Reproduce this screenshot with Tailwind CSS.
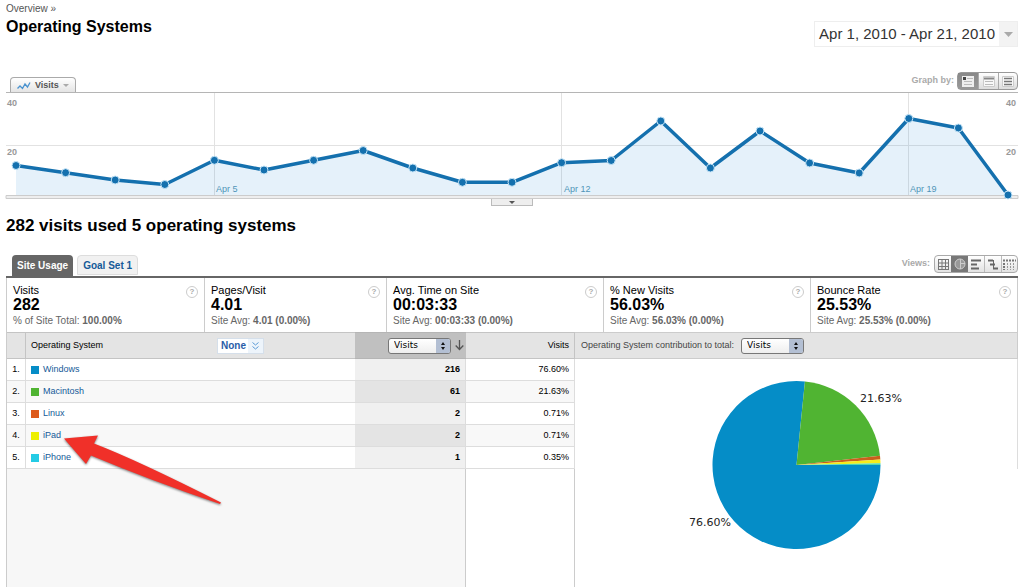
<!DOCTYPE html>
<html lang="en">
<head>
<meta charset="utf-8">
<title>Operating Systems</title>
<script src="https://cdn.jsdelivr.net/npm/@tailwindcss/browser@4"></script>
</head>
<body class="bg-white font-['Liberation_Sans',Arial,sans-serif] text-black">
<div class="flex min-h-screen flex-col px-1.5">

  <header class="flex items-start justify-between pt-1">
    <div>
      <nav class="text-[10px] leading-[10px] text-[#555]"><a href="#">Overview</a> »</nav>
      <h1 class="mt-[3px] text-base leading-5 font-bold">Operating Systems</h1>
    </div>
    <button class="mt-[17px] flex h-[26px] items-stretch border border-[#eee] text-[15px] text-[#333]">
      <span class="flex items-center px-1">Apr 1, 2010 - Apr 21, 2010</span>
      <span class="flex w-[18px] items-center justify-center bg-[#f3f3f3]">
        <svg width="9" height="5" viewBox="0 0 9 5"><path d="M0 0h9L4.500 5z" fill="#aaa"/></svg>
      </span>
    </button>
  </header>

  <div class="mt-[25px] flex h-5 items-end justify-between pl-1">
    <button class="flex h-[15px] items-center gap-1 rounded-t-sm border border-b-0 border-[#aaa] bg-linear-to-b from-white to-[#e4e4e4] px-1.5 text-[9px] leading-none font-bold text-[#555]">
      <svg width="14" height="9" viewBox="0 0 14 9" fill="none" stroke="#4b93cf" stroke-width="1.300"><path d="M.5 7.500 3 5l2.500 2.500L8 3l2.500 3L13 1.500"/></svg>
      Visits
      <svg width="6" height="3" viewBox="0 0 6 3"><path d="M0 0h6L3 3z" fill="#aaa"/></svg>
    </button>
    <div class="flex items-center gap-[3px] self-start text-[9px] font-bold text-[#aaa]">
      <span>Graph by:</span>
      <div class="flex h-[18px] rounded-sm border border-[#999] bg-linear-to-b from-white to-[#ddd]">
        <button aria-label="Day" class="flex w-5 items-center justify-center bg-linear-to-b from-[#888] to-[#999]">
          <svg width="12" height="11" viewBox="0 0 12 11"><path d="M0 0h12v11H0z" fill="#eee"/><path d="M1 1h3v3H1z" fill="#444"/><path d="M5 2.500h6M2 5.500h8M2 8.500h8" stroke="#bbb"/></svg>
        </button>
        <button aria-label="Week" class="flex w-5 items-center justify-center border-l border-[#aaa]">
          <svg width="12" height="11" viewBox="0 0 12 11"><path d="M.5.5h11v10H.5z" fill="#f8f8f8" stroke="#ccc"/><path d="M1 2.500h10" stroke="#888" stroke-width="2"/><path d="M2 5.500h8M2 8.500h8" stroke="#bbb"/></svg>
        </button>
        <button aria-label="Month" class="flex w-[19px] items-center justify-center border-l border-[#aaa]">
          <svg width="12" height="11" viewBox="0 0 12 11"><path d="M.5.5h11v10H.5z" fill="#f8f8f8" stroke="#ccc"/><path d="M2 2.500h8M2 5.500h8M2 8.500h8" stroke="#777" stroke-width="1.500"/></svg>
        </button>
      </div>
    </div>
  </div>

  <div class="border-t border-[#b5b5b5]">
    <svg class="block h-auto w-full overflow-visible font-['Liberation_Sans',Arial,sans-serif] text-[9px]" viewBox="0 0 1012 106">
      <path d="M0 52.500h1012M208.500 0v102M555.500 0v102M902.500 0v102" stroke="#e2e2e2"/>
      <path d="M10 102V72.500L59.600 79.700 109.200 87 158.800 91.500 208.400 67.300 258 77 307.600 67.300 357.200 57.500 406.800 75 456.400 89.300 506 89.300 555.600 69.700 605.200 67.500 654.800 28 704.400 75 754 38 803.600 70 853.200 80 902.800 25.500 952.400 35 1002 102z" fill="#0077cc" fill-opacity=".1"/>
      <path d="M0 102.500h1012v3H0z" fill="#eee" stroke="#ccc"/>
      <polyline points="10,72.500 59.600,79.700 109.200,87 158.800,91.500 208.400,67.300 258,77 307.600,67.300 357.200,57.500 406.800,75 456.400,89.300 506,89.300 555.600,69.700 605.200,67.500 654.800,28 704.400,75 754,38 803.600,70 853.200,80 902.800,25.500 952.400,35 1002,102" fill="none" stroke="#1470ae" stroke-width="3.500" stroke-linejoin="round"/>
      <g fill="#1470ae" stroke="#c5e4f7" stroke-width="1">
        <circle cx="10" cy="72.500" r="4"/><circle cx="59.600" cy="79.700" r="4"/><circle cx="109.200" cy="87" r="4"/><circle cx="158.800" cy="91.500" r="4"/><circle cx="208.400" cy="67.300" r="4"/><circle cx="258" cy="77" r="4"/><circle cx="307.600" cy="67.300" r="4"/><circle cx="357.200" cy="57.500" r="4"/><circle cx="406.800" cy="75" r="4"/><circle cx="456.400" cy="89.300" r="4"/><circle cx="506" cy="89.300" r="4"/><circle cx="555.600" cy="69.700" r="4"/><circle cx="605.200" cy="67.500" r="4"/><circle cx="654.800" cy="28" r="4"/><circle cx="704.400" cy="75" r="4"/><circle cx="754" cy="38" r="4"/><circle cx="803.600" cy="70" r="4"/><circle cx="853.200" cy="80" r="4"/><circle cx="902.800" cy="25.500" r="4"/><circle cx="952.400" cy="35" r="4"/><circle cx="1002" cy="102" r="4"/>
      </g>
      <g fill="#999" font-weight="bold">
        <text x="1" y="13">40</text><text x="1" y="62">20</text>
        <text x="1010" y="13" text-anchor="end">40</text><text x="1010" y="62" text-anchor="end">20</text>
      </g>
      <g fill="#4f95b8"><text x="210" y="99">Apr 5</text><text x="558" y="99">Apr 12</text><text x="904" y="99">Apr 19</text></g>
    </svg>
    <button aria-label="Toggle graph size" class="mx-auto flex h-[7px] w-[42px] items-center justify-center border border-t-0 border-[#bbb] bg-[#eee]">
      <svg width="6" height="3" viewBox="0 0 6 3"><path d="M0 0h6L3 3z" fill="#555"/></svg>
    </button>
  </div>

  <h2 class="mt-2.5 text-[17px] leading-5 font-bold">282 visits used 5 operating systems</h2>

  <div class="mt-[19px] flex items-start justify-between pl-1.5">
    <div class="flex gap-1 text-[10px] font-bold">
      <button class="h-[21px] rounded-t bg-[#666] px-[5px] text-white">Site Usage</button>
      <button class="h-5 rounded-t border border-[#ddd] bg-[#f1f1f1] px-[5px] text-[#155a98]">Goal Set 1</button>
    </div>
    <div class="flex items-center gap-1 text-[9px] font-bold text-[#aaa]">
      <span>Views:</span>
      <div class="flex h-[18px] rounded-sm border border-[#aaa] bg-linear-to-b from-white to-[#e2e2e2]">
        <button aria-label="Table" class="flex w-4 items-center justify-center">
          <svg width="11" height="11" viewBox="0 0 11 11" fill="none" stroke="#777"><path d="M.5 0v11M4 0v11M7.500 0v11M10.500 0v11M0 .5h11M0 4h11M0 7.500h11M0 10.500h11"/></svg>
        </button>
        <button aria-label="Percentage" class="flex w-[17px] items-center justify-center bg-[#777]">
          <svg width="12" height="12" viewBox="0 0 12 12" fill="none" stroke="#ccc"><circle cx="6" cy="6" r="5" fill="#999"/><path d="M6.500 1v10M6.500 5.500H11"/></svg>
        </button>
        <button aria-label="Performance" class="flex w-4 items-center justify-center">
          <svg width="11" height="11" viewBox="0 0 11 11" stroke="#666" stroke-width="2"><path d="M0 1.500h10M0 5.500h6M0 9.500h8"/></svg>
        </button>
        <button aria-label="Comparison" class="flex w-[17px] items-center justify-center border-l border-[#bbb]">
          <svg width="12" height="11" viewBox="0 0 12 11" fill="none" stroke="#666" stroke-width="2"><path d="M1 1.500h5M3 5.500h5M6 9.500h5"/><path d="M6.500 1v9" stroke-width="1"/></svg>
        </button>
        <button aria-label="Pivot" class="flex w-4 items-center justify-center border-l border-[#bbb]">
          <svg width="13" height="11" viewBox="0 0 13 11" fill="none" stroke="#777"><path d="M0 1.500h13" stroke-width="2" stroke-dasharray="2 1"/><path d="M1 4v7" stroke-width="2" stroke-dasharray="2 1"/><path d="M4.500 4v7M7.500 4v7M10.500 4v7" stroke="#999" stroke-dasharray="2 1"/></svg>
        </button>
      </div>
    </div>
  </div>

  <section class="grid grid-cols-[198fr_182fr_217fr_207fr_208fr] border-t-2 border-[#666] text-[10px] leading-[14px] text-[#666]">
    <div class="flex justify-between border-l border-[#ccc] px-1.5 pt-1.5 pb-1">
      <div><h3 class="text-[11px] leading-3 text-black">Visits</h3><p class="text-base leading-[18px] font-bold text-black">282</p><p>% of Site Total: <b>100.00%</b></p></div>
      <button aria-label="Help" class="mt-0.5 size-3 shrink-0 rounded-full border border-[#ccc] text-[8px] leading-[10px] font-bold text-[#aaa]">?</button>
    </div>
    <div class="flex justify-between border-l border-[#ccc] px-1.5 pt-1.5 pb-1">
      <div><h3 class="text-[11px] leading-3 text-black">Pages/Visit</h3><p class="text-base leading-[18px] font-bold text-black">4.01</p><p>Site Avg: <b>4.01 (0.00%)</b></p></div>
      <button aria-label="Help" class="mt-0.5 size-3 shrink-0 rounded-full border border-[#ccc] text-[8px] leading-[10px] font-bold text-[#aaa]">?</button>
    </div>
    <div class="flex justify-between border-l border-[#ccc] px-1.5 pt-1.5 pb-1">
      <div><h3 class="text-[11px] leading-3 text-black">Avg. Time on Site</h3><p class="text-base leading-[18px] font-bold text-black">00:03:33</p><p>Site Avg: <b>00:03:33 (0.00%)</b></p></div>
      <button aria-label="Help" class="mt-0.5 size-3 shrink-0 rounded-full border border-[#ccc] text-[8px] leading-[10px] font-bold text-[#aaa]">?</button>
    </div>
    <div class="flex justify-between border-l border-[#ccc] px-1.5 pt-1.5 pb-1">
      <div><h3 class="text-[11px] leading-3 text-black">% New Visits</h3><p class="text-base leading-[18px] font-bold text-black">56.03%</p><p>Site Avg: <b>56.03% (0.00%)</b></p></div>
      <button aria-label="Help" class="mt-0.5 size-3 shrink-0 rounded-full border border-[#ccc] text-[8px] leading-[10px] font-bold text-[#aaa]">?</button>
    </div>
    <div class="flex justify-between border-x border-[#ccc] px-1.5 pt-1.5 pb-1">
      <div><h3 class="text-[11px] leading-3 text-black">Bounce Rate</h3><p class="text-base leading-[18px] font-bold text-black">25.53%</p><p>Site Avg: <b>25.53% (0.00%)</b></p></div>
      <button aria-label="Help" class="mt-0.5 size-3 shrink-0 rounded-full border border-[#ccc] text-[8px] leading-[10px] font-bold text-[#aaa]">?</button>
    </div>
  </section>

  <main class="grid flex-1 grid-cols-[569fr_443fr] text-[9px]">
    <div class="relative flex flex-col border-l border-[#ccc]">
      <table class="w-full table-fixed border-separate border-spacing-0">
        <colgroup><col class="w-[19px]"><col><col class="w-[111px]"><col class="w-[109px]"></colgroup>
        <thead>
          <tr class="h-[27px] bg-[#e4e4e4]">
            <th class="border-y border-r border-[#c4c4c4] p-0"></th>
            <th class="border-y border-[#c4c4c4] p-0 pl-[5px] text-left font-normal">
              <div class="flex items-center justify-between pr-[91px]">
                <span>Operating System</span>
                <button class="flex h-4 items-center border border-[#d5dfea] bg-white pl-[3px] text-[10px] font-bold text-[#2a5da8]">None
                  <span class="ml-0.5 flex h-full w-[15px] items-center justify-center bg-[#edf4fb]"><svg width="7" height="8" viewBox="0 0 7 8" fill="none" stroke="#5b9bd5"><path d="M.5.5l3 2.500 3-2.500M.5 4.500l3 2.500 3-2.500"/></svg></span>
                </button>
              </div>
            </th>
            <th class="border-y border-[#b5b5b5] bg-[#c0c0c0] p-0">
              <div class="flex items-center justify-end gap-1 pr-0.5">
                <div class="relative">
                  <select aria-label="Metric" class="block h-4 w-[63px] appearance-none rounded-[3px] border border-[#777] bg-linear-to-b from-white to-[#eee] pl-[5px] font-['DejaVu_Sans',sans-serif] text-[9px] font-normal"><option>Visits</option></select>
                  <svg class="pointer-events-none absolute top-px right-px" width="14" height="14" viewBox="0 0 14 14"><path d="M0 0h12q2 0 2 2v10q0 2-2 2H0z" fill="#b3bfd3"/><path d="M5 6 7 3 9 6zM5 8 7 11 9 8z" fill="#111"/></svg>
                </div>
                <svg width="9" height="11" viewBox="0 0 9 11" fill="none" stroke="#555" stroke-width="1.300"><path d="M4.500 0v9.500M.7 5.500l3.800 4 3.800-4"/></svg>
              </div>
            </th>
            <th class="border-y border-r border-[#c4c4c4] p-0 pr-[5px] text-right font-normal">Visits</th>
          </tr>
        </thead>
        <tbody>
          <tr class="h-[22px]">
            <td class="border-r border-b border-[#ddd] p-0 text-center">1.</td>
            <td class="border-b border-[#ddd] p-0 pl-[5px]"><a href="#" class="flex items-center gap-1 text-[#155a98]"><span class="size-2 bg-[#058dc7]"></span>Windows</a></td>
            <td class="border-r border-b border-[#ddd] bg-[#f0f0f0] p-0 pr-[5px] text-right font-bold">216</td>
            <td class="border-r border-b border-[#ddd] p-0 pr-[5px] text-right">76.60%</td>
          </tr>
          <tr class="h-[22px] bg-[#f8f8f8]">
            <td class="border-r border-b border-[#ddd] p-0 text-center">2.</td>
            <td class="border-b border-[#ddd] p-0 pl-[5px]"><a href="#" class="flex items-center gap-1 text-[#155a98]"><span class="size-2 bg-[#50b432]"></span>Macintosh</a></td>
            <td class="border-r border-b border-[#ddd] bg-[#e4e4e4] p-0 pr-[5px] text-right font-bold">61</td>
            <td class="border-r border-b border-[#ddd] p-0 pr-[5px] text-right">21.63%</td>
          </tr>
          <tr class="h-[22px]">
            <td class="border-r border-b border-[#ddd] p-0 text-center">3.</td>
            <td class="border-b border-[#ddd] p-0 pl-[5px]"><a href="#" class="flex items-center gap-1 text-[#155a98]"><span class="size-2 bg-[#dd5a1c]"></span>Linux</a></td>
            <td class="border-r border-b border-[#ddd] bg-[#f0f0f0] p-0 pr-[5px] text-right font-bold">2</td>
            <td class="border-r border-b border-[#ddd] p-0 pr-[5px] text-right">0.71%</td>
          </tr>
          <tr class="h-[22px] bg-[#f8f8f8]">
            <td class="border-r border-b border-[#ddd] p-0 text-center">4.</td>
            <td class="border-b border-[#ddd] p-0 pl-[5px]"><a href="#" class="flex items-center gap-1 text-[#155a98]"><span class="size-2 bg-[#edef00]"></span>iPad</a></td>
            <td class="border-r border-b border-[#ddd] bg-[#e4e4e4] p-0 pr-[5px] text-right font-bold">2</td>
            <td class="border-r border-b border-[#ddd] p-0 pr-[5px] text-right">0.71%</td>
          </tr>
          <tr class="h-[22px]">
            <td class="border-r border-b border-[#ddd] p-0 text-center">5.</td>
            <td class="border-b border-[#ddd] p-0 pl-[5px]"><a href="#" class="flex items-center gap-1 text-[#155a98]"><span class="size-2 bg-[#24cbe5]"></span>iPhone</a></td>
            <td class="border-r border-b border-[#ddd] bg-[#f0f0f0] p-0 pr-[5px] text-right font-bold">1</td>
            <td class="border-r border-b border-[#ddd] p-0 pr-[5px] text-right">0.35%</td>
          </tr>
        </tbody>
      </table>
      <div class="flex flex-1">
        <div class="flex-1 border-r border-[#ccc] bg-[#f7f7f7]"></div>
        <div class="w-[109px] border-r border-[#ccc]"></div>
      </div>
      <!-- arrow that points at the iPad row -->
      <svg class="pointer-events-none absolute top-[100px] left-[55px] overflow-visible drop-shadow-[0_1px_1px_rgba(0,0,0,0.5)]" width="162" height="76" viewBox="0 0 162 76">
        <path d="M2 6.500 36 3.500 32 11.500Q75 28 159 70.500L158 72Q90 49 29 23.500L24 32z" fill="#f03029"/>
      </svg>
    </div>

    <div class="flex flex-col">
      <div class="flex h-[27px] items-center gap-[7px] border-y border-r border-[#ccc] bg-[#e4e4e4] pl-1.5 text-[#444]">
        <label for="contribution">Operating System contribution to total:</label>
        <div class="relative">
          <select id="contribution" class="block h-4 w-[63px] appearance-none rounded-[3px] border border-[#777] bg-linear-to-b from-white to-[#eee] pl-[5px] font-['DejaVu_Sans',sans-serif] text-[9px] text-black"><option>Visits</option></select>
          <svg class="pointer-events-none absolute top-px right-px" width="14" height="14" viewBox="0 0 14 14"><path d="M0 0h12q2 0 2 2v10q0 2-2 2H0z" fill="#b3bfd3"/><path d="M5 6 7 3 9 6zM5 8 7 11 9 8z" fill="#111"/></svg>
        </div>
      </div>
      <div class="h-[110px] border-r border-[#ddd]">
        <svg class="mx-auto block overflow-visible font-['DejaVu_Sans',sans-serif] text-[11px]" width="240" height="200" viewBox="0 0 240 200">
          <g transform="translate(120.500 106)">
            <path d="M0 0H84A84 84 0 1 1 8.430-83.580z" fill="#058dc7"/>
            <path d="M0 0 8.430-83.580A84 84 0 0 1 83.480-9.320z" fill="#50b432"/>
            <path d="M0 0 83.480-9.320A84 84 0 0 1 83.820-5.590z" fill="#c9601c"/>
            <path d="M0 0 83.820-5.590A84 84 0 0 1 83.980-1.850z" fill="#f5ec1a"/>
            <path d="M0 0 83.980-1.850A84 84 0 0 1 84 0z" fill="#4fd6b0"/>
          </g>
          <text x="184" y="43" fill="#222">21.63%</text>
          <text x="13" y="167" fill="#222">76.60%</text>
        </svg>
      </div>
    </div>
  </main>
</div>
</body>
</html>
